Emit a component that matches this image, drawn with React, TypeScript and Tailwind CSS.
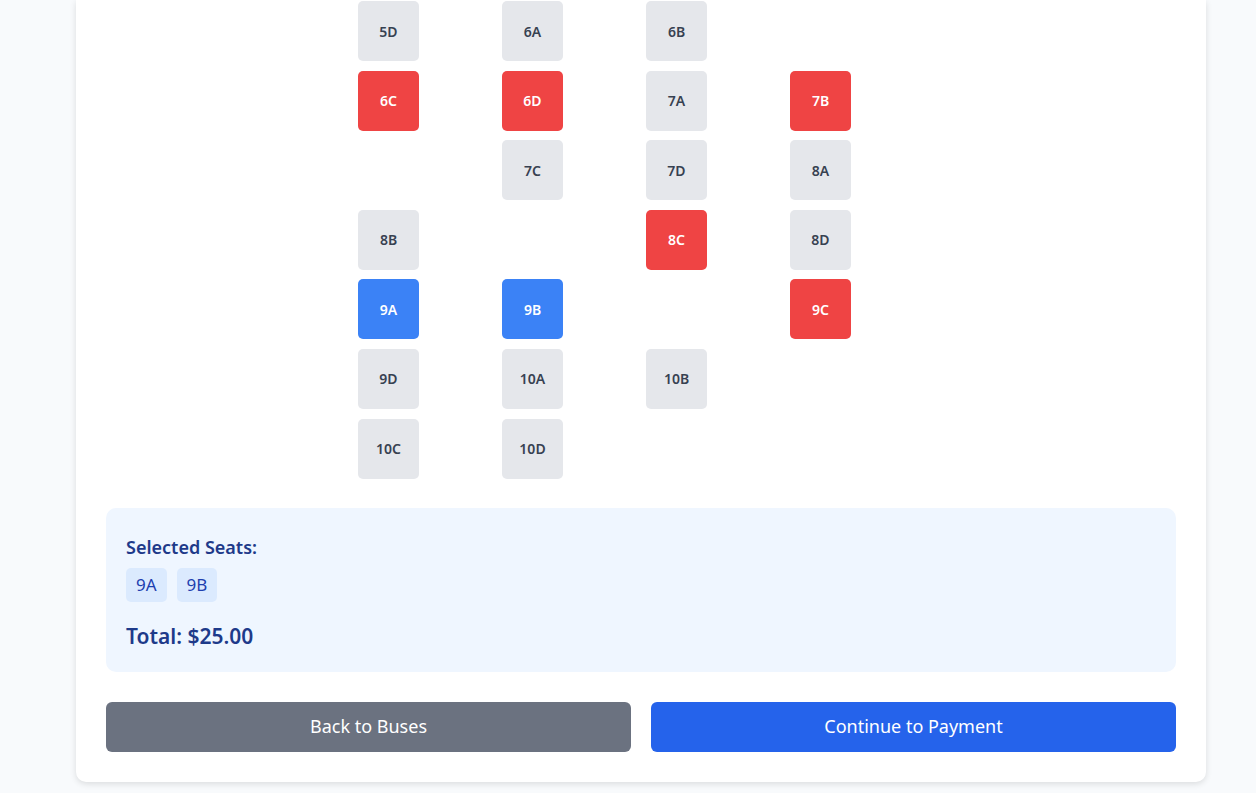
import React from "react";

type Seat = { id: string; state: "free" | "booked" | "selected" } | null;

const rows: Seat[][] = [
  [{ id: "5D", state: "free" }, { id: "6A", state: "free" }, { id: "6B", state: "free" }, null],
  [{ id: "6C", state: "booked" }, { id: "6D", state: "booked" }, { id: "7A", state: "free" }, { id: "7B", state: "booked" }],
  [null, { id: "7C", state: "free" }, { id: "7D", state: "free" }, { id: "8A", state: "free" }],
  [{ id: "8B", state: "free" }, null, { id: "8C", state: "booked" }, { id: "8D", state: "free" }],
  [{ id: "9A", state: "selected" }, { id: "9B", state: "selected" }, null, { id: "9C", state: "booked" }],
  [{ id: "9D", state: "free" }, { id: "10A", state: "free" }, { id: "10B", state: "free" }, null],
  [{ id: "10C", state: "free" }, { id: "10D", state: "free" }, null, null],
];

function SeatBox({ seat }: { seat: Seat }) {
  if (!seat) return <div className="w-[60px] h-[60px]" />;
  const cls =
    seat.state === "booked"
      ? "bg-[#ef4444] text-white"
      : seat.state === "selected"
      ? "bg-[#3b82f6] text-white"
      : "bg-[#e5e7eb] text-[#374151]";
  return (
    <div className={`w-[61px] h-[60px] rounded-[5px] flex items-center justify-center text-[14px] font-semibold ${cls}`}>
      {seat.id}
    </div>
  );
}

export default function App() {
  return (
    <div
      className="min-h-screen bg-[#f8fafc] pb-[11px]"
      style={{ fontFamily: '"Noto Sans", "Open Sans", sans-serif' }}
    >
      <div className="ml-[76px] w-[1130px] bg-white rounded-b-[10px] shadow-[0_2px_6px_rgba(0,0,0,0.12)] px-[30px] pb-[30px]">
        <div className="pt-px pl-[252px] grid grid-cols-[repeat(4,60px)] gap-x-[84px] gap-y-[9.6px]">
          {rows.flat().map((s, i) => (
            <SeatBox key={i} seat={s} />
          ))}
        </div>
        <div className="mt-[29px] h-[164px] bg-[#eff6ff] rounded-[10px] px-[20px] pt-[25px]">
          <div className="text-[18px] leading-[28px] font-semibold text-[#1e3a8a]">Selected Seats:</div>
          <div className="mt-[7px] flex gap-[10px]">
            {["9A", "9B"].map((s) => (
              <span
                key={s}
                className="h-[34px] px-[10px] flex items-center rounded-[5px] bg-[#dbeafe] text-[#1e40af] text-[17px]"
              >
                {s}
              </span>
            ))}
          </div>
          <div className="mt-[19px] text-[21px] leading-[30px] font-semibold text-[#1e3a8a]">Total: $25.00</div>
        </div>
        <div className="mt-[30px] flex gap-[20px]">
          <button className="flex-1 h-[50px] rounded-[6px] bg-[#6b7280] text-white text-[18px]">Back to Buses</button>
          <button className="flex-1 h-[50px] rounded-[6px] bg-[#2563eb] text-white text-[18px]">Continue to Payment</button>
        </div>
      </div>
    </div>
  );
}
